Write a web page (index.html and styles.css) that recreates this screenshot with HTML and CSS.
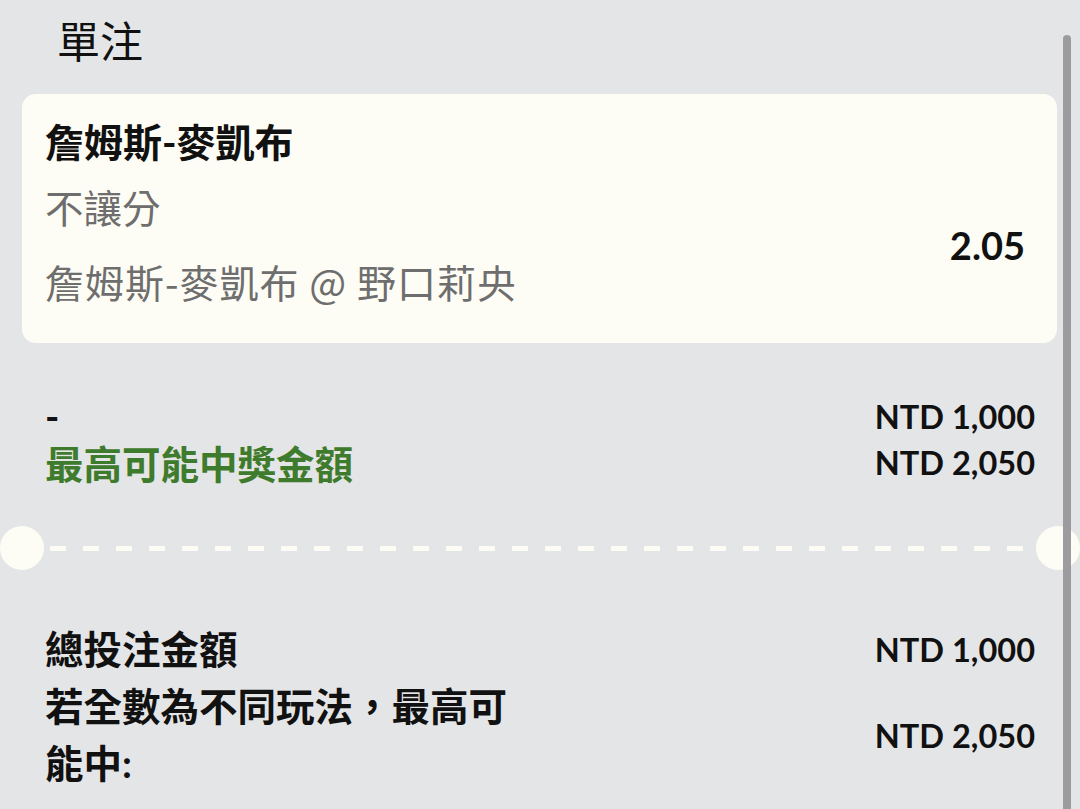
FILE: index.html
```html
<!DOCTYPE html>
<html lang="zh-Hant">
<head>
<meta charset="utf-8">
<title>單注</title>
<link rel="stylesheet" href="styles.css">
</head>
<body>
<div class="page">
  <header class="header">
    <h1 class="title">單注</h1>
  </header>

  <section class="card">
    <div class="card-title">詹姆斯-麥凱布</div>
    <div class="card-body">
      <div class="card-info">
        <div class="market">不讓分</div>
        <div class="event">詹姆斯-麥凱布 @ 野口莉央</div>
      </div>
      <div class="odds">2.05</div>
    </div>
  </section>

  <section class="stake">
    <div class="row">
      <div class="label dash-label">-</div>
      <div class="value">NTD 1,000</div>
    </div>
    <div class="row">
      <div class="label win-label">最高可能中獎金額</div>
      <div class="value">NTD 2,050</div>
    </div>
  </section>

  <div class="divider">
    <span class="notch"></span>
    <span class="dashes"></span>
    <span class="notch"></span>
  </div>

  <section class="summary">
    <div class="sum-row">
      <div class="sum-label">總投注金額</div>
      <div class="value">NTD 1,000</div>
    </div>
    <div class="sum-row">
      <div class="sum-label">若全數為不同玩法，最高可能中:</div>
      <div class="value">NTD 2,050</div>
    </div>
  </section>

  <div class="scrollbar"></div>
</div>
</body>
</html>
```

FILE: styles.css
```css
html, body {
  margin: 0;
  padding: 0;
}

body {
  background: #e4e5e7;
  font-family: "Lato", "Noto Sans CJK TC", sans-serif;
  color: #111;
}

.page {
  position: relative;
  width: 1080px;
  height: 809px;
  overflow: hidden;
}

.header {
  height: 94px;
  padding-left: 57px;
  box-sizing: border-box;
}

.title {
  margin: 0;
  padding-top: 13px;
  font-family: "Noto Sans CJK TC", sans-serif;
  font-weight: 400;
  font-size: 43px;
  line-height: 52px;
  color: #111;
}

.card {
  margin: 0 23px 0 22px;
  height: 249px;
  box-sizing: border-box;
  background: #fefdf5;
  border-radius: 14px;
  padding: 23px 32px 0 23px;
}

.card-title {
  font-weight: 700;
  font-size: 39px;
  line-height: 50px;
  color: #111;
}

.card-body {
  display: flex;
  align-items: center;
  justify-content: space-between;
  margin-top: 16px;
}

.card-info {
  color: #6e6e6e;
  font-size: 38.5px;
}

.market {
  line-height: 50px;
}

.event {
  font-family: "Noto Sans CJK TC", sans-serif;
  font-size: 39px;
  letter-spacing: 1px;
  line-height: 50px;
  margin-top: 23px;
}

.odds {
  font-weight: 700;
  font-size: 38px;
  line-height: 50px;
  color: #111;
}

.stake {
  padding: 50px 45px 0 45px;
}

.row {
  display: flex;
  justify-content: space-between;
  align-items: center;
  height: 46px;
}

.label {
  font-weight: 700;
  font-size: 38.5px;
}

.dash-label {
  color: #111;
}

.win-label {
  color: #3f7b2c;
}

.value {
  font-weight: 700;
  font-size: 32.5px;
  color: #111;
  white-space: nowrap;
}

.divider {
  display: flex;
  align-items: center;
  gap: 6px;
  margin-top: 41px;
}

.notch {
  flex: 0 0 44px;
  height: 44px;
  border-radius: 50%;
  background: #fefdf5;
}

.dashes {
  flex: 1;
  height: 5px;
  background: repeating-linear-gradient(to right, #fdfcf4 0 16px, transparent 16px 33px);
}

.summary {
  padding: 51px 45px 0 45px;
}

.sum-row {
  display: flex;
  justify-content: space-between;
  align-items: center;
}

.sum-label {
  width: 490px;
  font-weight: 700;
  font-size: 38.5px;
  line-height: 57px;
  color: #111;
}

.scrollbar {
  position: absolute;
  top: 35px;
  bottom: -10px;
  right: 9px;
  width: 8px;
  border-radius: 4px;
  background: #9c9c9e;
}
```
